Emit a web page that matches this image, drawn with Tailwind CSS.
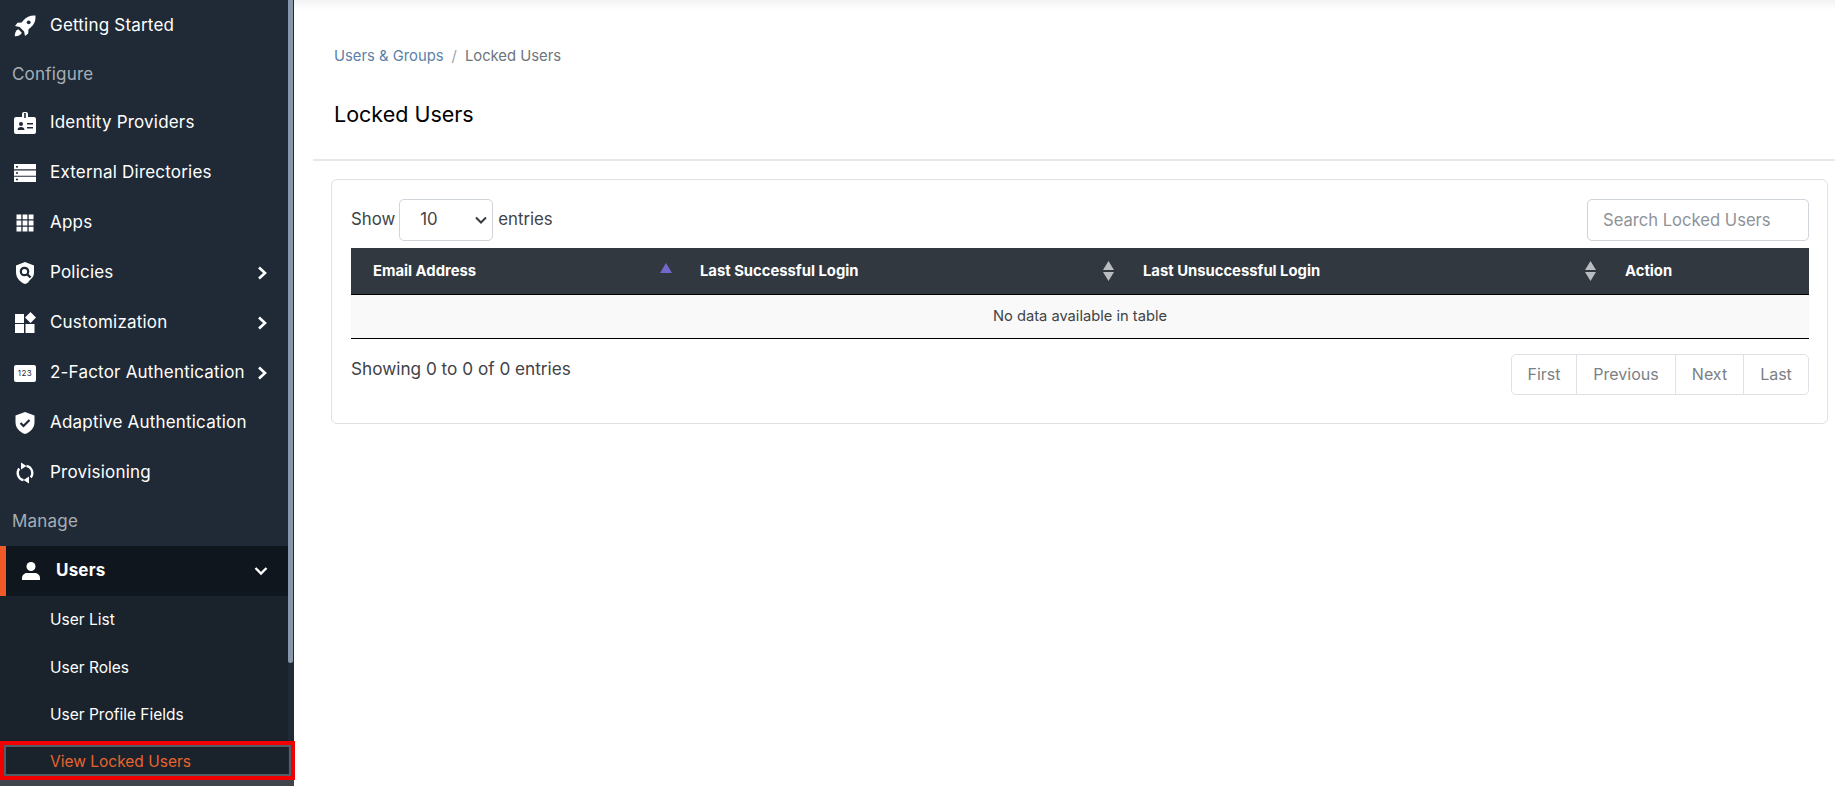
<!DOCTYPE html>
<html lang="en">
<head>
  <meta charset="UTF-8" />
  <title>Locked Users</title>
  <script src="https://cdn.jsdelivr.net/npm/@tailwindcss/browser@4"></script>
</head>
<body class="h-[786px] overflow-hidden flex bg-white font-['Inter',sans-serif]">
  <!-- sidebar -->
  <aside class="relative w-[294px] h-full flex shrink-0">
    <nav class="w-[288px] h-full bg-[#1f2a36] text-white text-[17px] tracking-[.2px] flex flex-col">
      <a class="h-[51px] flex items-center pl-[14px]">
        <svg class="w-[22px] h-[22px] mr-[14px]" viewBox="0 0 22 22"><path fill="#fff" d="M21.500.500c-5-.4-9 1.200-12 4.800L7.700 7.500 3.500 7.800 1 11l4.600.9 4.500 4.500.9 4.600 3.200-2.500.3-4.200 2.200-1.800c3.600-3 5.200-7 4.800-12z"/><circle cx="14.700" cy="7.300" r="1.900" fill="#1f2a36"/><path fill="#fff" d="M4.300 14.200l3.500 3.500C6.800 20 4 21.500.800 21.200.500 18 2 15.200 4.300 14.200z"/></svg>
        <span>Getting Started</span>
      </a>
      <div class="h-[47px] flex items-center pl-[12px] text-[#a7aeb6]">Configure</div>
      <a class="h-[50px] flex items-center pl-[14px]">
        <svg class="w-[22px] h-[22px] mr-[14px]" viewBox="0 0 22 22"><path fill="#fff" d="M8 5V2a2 2 0 0 1 2-2h2a2 2 0 0 1 2 2v3h6a2 2 0 0 1 2 2v13a2 2 0 0 1-2 2H2a2 2 0 0 1-2-2V7a2 2 0 0 1 2-2z"/><rect x="10.200" y="1" width="1.600" height="5" fill="#1f2a36"/><circle cx="7" cy="12" r="2" fill="#1f2a36"/><path fill="#1f2a36" d="M3.500 18c0-2 1.500-3 3.500-3s3.500 1 3.500 3zM13 11h6v1.500h-6zM13 15h6v1.500h-6z"/></svg>
        <span>Identity Providers</span>
      </a>
      <a class="h-[50px] flex items-center pl-[14px]">
        <svg class="w-[22px] h-[22px] mr-[14px]" viewBox="0 0 22 22"><path fill="#fff" d="M0 2h22v5.300H0zM0 8.400h22v5.300H0zM0 14.800h22V20H0z"/><path fill="#1f2a36" d="M2 4h2v1.500H2zM2 10.300h2v1.500H2zM2 16.700h2v1.500H2z"/></svg>
        <span>External Directories</span>
      </a>
      <a class="h-[50px] flex items-center pl-[14px]">
        <svg class="w-[22px] h-[22px] mr-[14px]" viewBox="0 0 22 22" fill="#fff"><path d="M2.500 2.500h4.800v4.800H2.500zM8.600 2.500h4.800v4.800H8.600zM14.700 2.500h4.800v4.800h-4.800zM2.500 8.600h4.800v4.800H2.500zM8.600 8.600h4.800v4.800H8.600zM14.700 8.600h4.800v4.800h-4.800zM2.500 14.700h4.800v4.800H2.500zM8.600 14.700h4.800v4.800H8.600zM14.700 14.700h4.800v4.800h-4.800z"/></svg>
        <span>Apps</span>
      </a>
      <a class="h-[50px] flex items-center pl-[14px] pr-[20px]">
        <svg class="w-[22px] h-[22px] mr-[14px]" viewBox="0 0 22 22"><path fill="#fff" d="M11 0l9 3.500V10c0 5.500-3.500 10-9 12-5.500-2-9-6.500-9-12V3.500z"/><circle cx="10.500" cy="9.500" r="3.700" fill="none" stroke="#1f2a36" stroke-width="2.200"/><path stroke="#1f2a36" stroke-width="2.400" d="M13 12l3.500 3.500"/><path stroke="#1f2a36" stroke-width="1.500" d="M15 20l6-6"/></svg>
        <span class="flex-1">Policies</span>
        <svg class="w-[12px] h-[14px]" viewBox="0 0 12 14" fill="none" stroke="#fff" stroke-width="2.600"><path d="M3 1.500L9 7l-6 5.500"/></svg>
      </a>
      <a class="h-[50px] flex items-center pl-[14px] pr-[20px]">
        <svg class="w-[22px] h-[22px] mr-[14px]" viewBox="0 0 22 22" fill="#fff"><path d="M1 2h9v9H1zM1 12h9v9H1zM11.500 12h9v9h-9zM16.500 0l5.500 5.500-5.500 5.500L11 5.500z"/></svg>
        <span class="flex-1">Customization</span>
        <svg class="w-[12px] h-[14px]" viewBox="0 0 12 14" fill="none" stroke="#fff" stroke-width="2.600"><path d="M3 1.500L9 7l-6 5.500"/></svg>
      </a>
      <a class="h-[50px] flex items-center pl-[14px] pr-[20px]">
        <span class="w-[22px] h-[17px] mr-[14px] rounded-[2px] bg-white text-[#1f2a36] text-[8px] tracking-[.5px] flex items-center justify-center">123</span>
        <span class="flex-1 whitespace-nowrap">2-Factor Authentication</span>
        <svg class="w-[12px] h-[14px]" viewBox="0 0 12 14" fill="none" stroke="#fff" stroke-width="2.600"><path d="M3 1.500L9 7l-6 5.500"/></svg>
      </a>
      <a class="h-[50px] flex items-center pl-[14px]">
        <svg class="w-[22px] h-[22px] mr-[14px]" viewBox="0 0 22 22"><path fill="#fff" d="M11 0l9.500 3.500V10c0 5.500-3.500 10-9.500 12C5 20 1.500 15.500 1.500 10V3.500z"/><path fill="none" stroke="#1f2a36" stroke-width="2.200" d="M6.500 11l3 3 6-6"/></svg>
        <span>Adaptive Authentication</span>
      </a>
      <a class="h-[50px] flex items-center pl-[14px]">
        <svg class="w-[22px] h-[22px] mr-[14px]" viewBox="0 0 22 22" fill="none" stroke="#fff" stroke-width="2.300"><path d="M12.500 3.800a7.400 7.400 0 0 1 4.300 11.700M9.500 18.200a7.400 7.400 0 0 1-4.300-11.700"/><path fill="#fff" stroke="none" d="M7 7.500V.500l5.500 3.500zM15 14.500v7l-5.500-3.500z"/></svg>
        <span>Provisioning</span>
      </a>
      <div class="h-[48px] flex items-center pl-[12px] text-[#a7aeb6]">Manage</div>
      <a class="h-[50px] flex items-center bg-[#10161d] border-l-[6px] border-[#f05a28] pl-[16px] pr-[20px] font-bold">
        <svg class="w-[18px] h-[18px] mr-[16px]" viewBox="0 0 18 18" fill="#fff"><circle cx="9" cy="4.500" r="4.500"/><path d="M0 18v-2c0-3 2.500-5 5.500-5h7c3 0 5.500 2 5.500 5v2z"/></svg>
        <span class="flex-1">Users</span>
        <svg class="w-[14px] h-[12px]" viewBox="0 0 14 12" fill="none" stroke="#fff" stroke-width="2.400"><path d="M1.500 3L7 8.500 12.500 3"/></svg>
      </a>
      <div class="flex-1 bg-[#1a222c] text-[15.500px] tracking-normal">
        <a class="h-[47.500px] flex items-center pl-[50px]">User List</a>
        <a class="h-[47.500px] flex items-center pl-[50px]">User Roles</a>
        <a class="h-[47.500px] flex items-center pl-[50px]">User Profile Fields</a>
        <a class="h-[46px] flex items-center pl-[50px] text-[#e8642c]">View Locked Users</a>
      </div>
    </nav>
    <div class="w-[6px] h-full bg-[#1f2a36]">
      <div class="w-[5px] h-[663px] bg-[#8797ab] rounded-b-[3px]"></div>
    </div>
    <!-- red annotation box -->
    <div class="absolute left-0 top-[741px] w-[295px] h-[39px] border-[4px] border-[#f00000] pointer-events-none">
      <div class="w-full h-full border-[2px] border-[#565c63]"></div>
    </div>
    <div class="absolute left-0 top-[780px] w-[294px] h-[6px] bg-[#3f454b]"></div>
  </aside>

  <!-- main -->
  <main class="flex-1 min-w-0 flex flex-col">
    <div class="h-[10px] bg-gradient-to-b from-[#f3f3f3] to-white"></div>
    <div class="pl-[40px] pt-[37px] text-[14.800px] leading-[18px] flex">
      <a class="text-[#5b7fa6]">Users &amp; Groups</a>
      <span class="text-[#a0a4a8] mx-[8px]">/</span>
      <span class="text-[#6c757d]">Locked Users</span>
    </div>
    <h1 class="pl-[40px] pt-[35px] text-[21.500px] leading-[28px] text-black">Locked Users</h1>
    <div class="mt-[31px] ml-[19px] border-t-2 border-[#e8e8e8]"></div>

    <section class="ml-[37px] mr-[7px] mt-[18px] h-[245px] border border-[#dfe1e3] rounded-[6px] pl-[19px] pr-[18px] pt-[19px]">
      <div class="flex items-center justify-between h-[42px]">
        <div class="flex items-center text-[16.800px] text-[#3f4347]">
          <span>Show</span>
          <div class="ml-[4px] mr-[5px] w-[94px] h-[42px] border border-[#ced4da] rounded-[5px] flex items-center justify-between pl-[20px] pr-[5px]">
            <span>10</span>
            <svg class="w-[12px] h-[10px]" viewBox="0 0 12 10" fill="none" stroke="#343a40" stroke-width="2"><path d="M1 2.500l5 5 5-5"/></svg>
          </div>
          <span>entries</span>
        </div>
        <div class="w-[222px] h-[42px] border border-[#ced4da] rounded-[5px] flex items-center pl-[15px] text-[16.600px] text-[#8d9399]">Search Locked Users</div>
      </div>
      <table class="mt-[7px] w-[1458px] table-fixed border-collapse">
        <thead>
          <tr class="h-[46px] bg-[#31383f] text-white text-[14.800px] font-bold text-left border-b border-black">
            <th class="w-[327px] pl-[22px] pr-[6px]">
              <div class="flex items-center justify-between">Email Address
                <svg class="w-[12px] h-[10px] -mt-[6px]" viewBox="0 0 12 10" fill="#7367c9"><path d="M6 0l6 10H0z"/></svg>
              </div>
            </th>
            <th class="w-[444px] pl-[22px] pr-[8px]">
              <div class="flex items-center justify-between">Last Successful Login
                <svg class="w-[11px] h-[20px]" viewBox="0 0 11 20" fill="#b9bdc1"><path d="M5.500 0L11 9H0zM0 11h11l-5.500 9z"/></svg>
              </div>
            </th>
            <th class="w-[482px] pl-[21px] pr-[8px]">
              <div class="flex items-center justify-between">Last Unsuccessful Login
                <svg class="w-[11px] h-[20px]" viewBox="0 0 11 20" fill="#b9bdc1"><path d="M5.500 0L11 9H0zM0 11h11l-5.500 9z"/></svg>
              </div>
            </th>
            <th class="pl-[21px]">Action</th>
          </tr>
        </thead>
        <tbody>
          <tr class="h-[44px] bg-[#f9f9f9] border-b border-black">
            <td colspan="4" class="text-center text-[14.700px] text-[#3f4347]">No data available in table</td>
          </tr>
        </tbody>
      </table>
      <div class="mt-[15px] flex justify-between items-start">
        <span class="text-[17.200px] text-[#3f4347] mt-[2px]">Showing 0 to 0 of 0 entries</span>
        <div class="h-[41px] flex border border-[#dee2e6] rounded-[5px] text-[16px] text-[#7b8086] divide-x divide-[#dee2e6]">
          <span class="w-[65px] flex items-center justify-center">First</span>
          <span class="w-[99px] flex items-center justify-center">Previous</span>
          <span class="w-[68px] flex items-center justify-center">Next</span>
          <span class="w-[64px] flex items-center justify-center">Last</span>
        </div>
      </div>
    </section>
  </main>
</body>
</html>
